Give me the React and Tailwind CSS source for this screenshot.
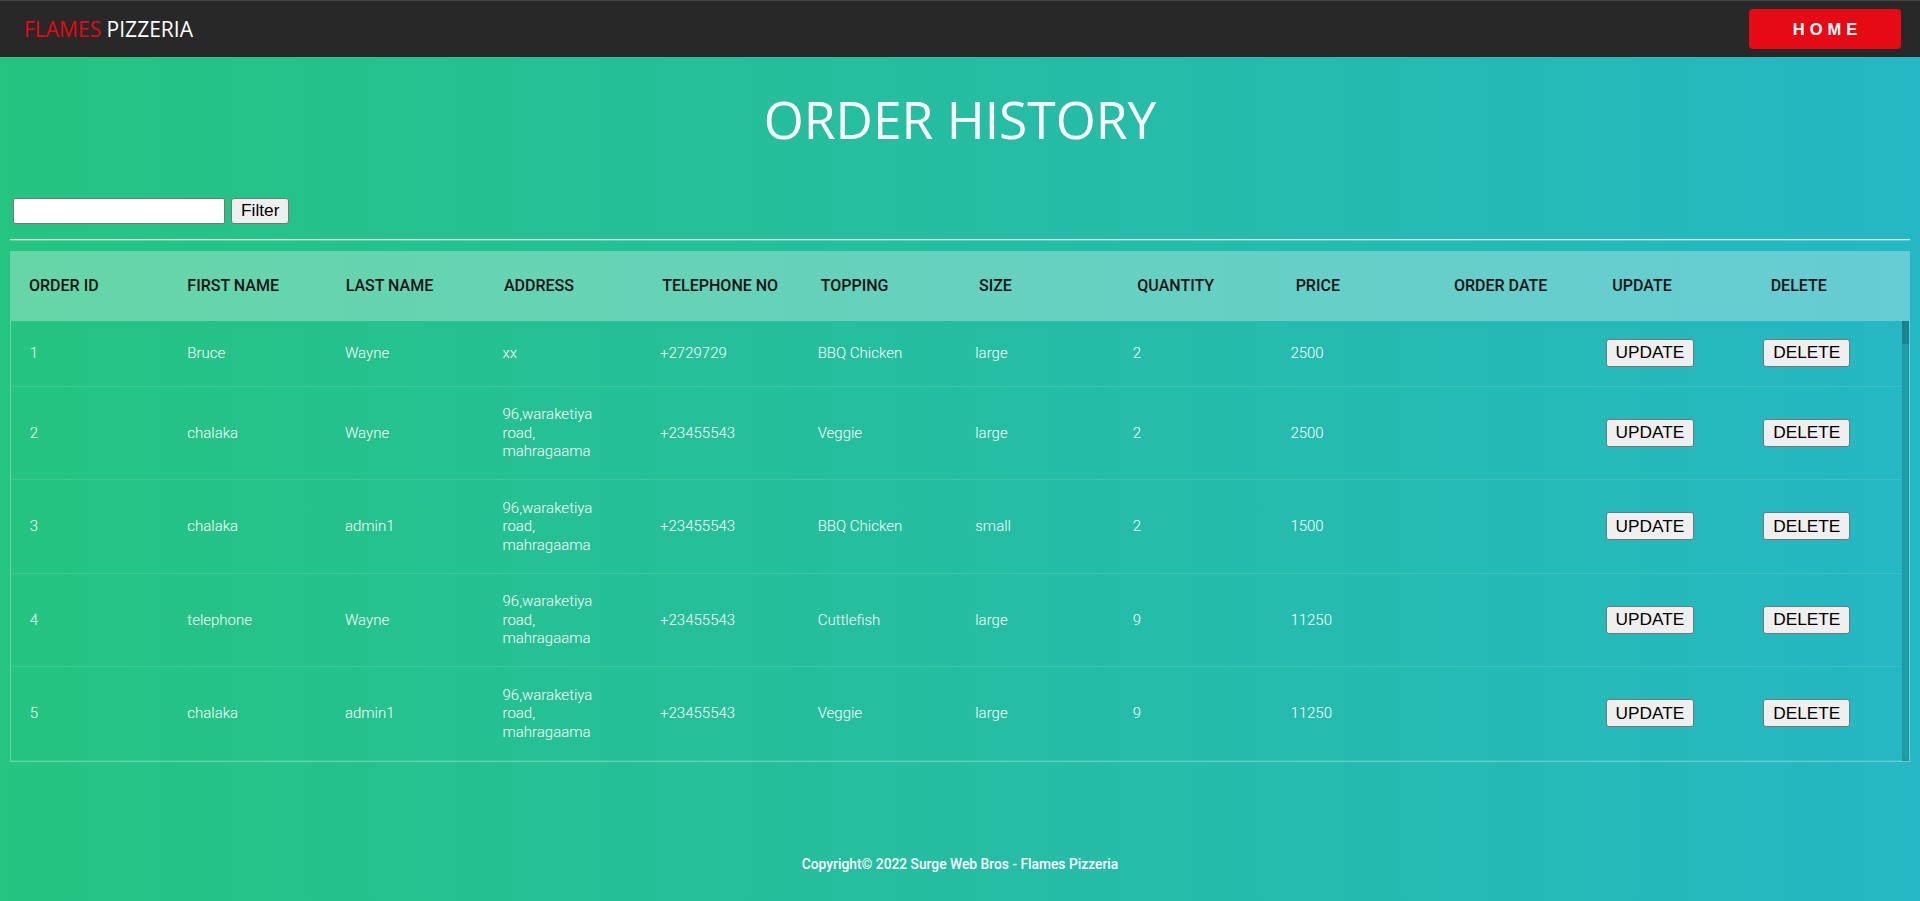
import React from "react";

const headers = [
  "Order ID",
  "First Name",
  "Last Name",
  "Address",
  "Telephone No",
  "Topping",
  "Size",
  "Quantity",
  "Price",
  "Order Date",
  "Update",
  "Delete",
];

const addr = "96,waraketiya road, mahragaama";

const rows = [
  ["1", "Bruce", "Wayne", "xx", "+2729729", "BBQ Chicken", "large", "2", "2500", ""],
  ["2", "chalaka", "Wayne", addr, "+23455543", "Veggie", "large", "2", "2500", ""],
  ["3", "chalaka", "admin1", addr, "+23455543", "BBQ Chicken", "small", "2", "1500", ""],
  ["4", "telephone", "Wayne", addr, "+23455543", "Cuttlefish", "large", "9", "11250", ""],
  ["5", "chalaka", "admin1", addr, "+23455543", "Veggie", "large", "9", "11250", ""],
];

function NativeButton({ children }) {
  return (
    <button className="h-[28px] px-[9px] bg-[#efefef] border border-[#767676] rounded-[3px] text-[17.3px] leading-none text-black font-['Liberation_Sans',Arial,sans-serif]">
      {children}
    </button>
  );
}

export default function App() {
  return (
    <div className="min-h-screen w-full bg-[linear-gradient(to_right,#25c481,#25b7c4)] flex flex-col">
      {/* Navbar */}
      <nav className="h-[57px] bg-[#282828] border-t border-[#454545] flex items-center justify-between pl-[24px] pr-[19px]">
        <div className="font-['Open_Sans',sans-serif] text-[21px] leading-none">
          <span className="text-[#e50914]">FLAMES</span>
          <span className="text-white"> PIZZERIA</span>
        </div>
        <button className="w-[152px] h-[40px] bg-[#e60a14] rounded-[4px] text-white font-bold text-[16.5px] tracking-[5px] pl-[5px] font-['Liberation_Sans',Arial,sans-serif]">
          HOME
        </button>
      </nav>

      {/* Title */}
      <h1 className="mt-[37px] text-center text-white font-['Open_Sans',sans-serif] text-[51.5px] leading-none font-normal">
        ORDER HISTORY
      </h1>

      {/* Filter */}
      <div className="mt-[52px] ml-[13px] flex items-center gap-[6px]">
        <input
          type="text"
          className="w-[212px] h-[26px] bg-white border border-[#767676] rounded-[2px] px-1 outline-none"
        />
        <button className="h-[26px] px-[9px] bg-[#efefef] border border-[#767676] rounded-[3px] text-[17.3px] leading-none text-black font-['Liberation_Sans',Arial,sans-serif]">
          Filter
        </button>
      </div>

      {/* hr */}
      <div className="mt-[15px] mx-[10px] h-px bg-white/90" />
      <div className="mx-[10px] h-px bg-white/25" />

      {/* Table */}
      <div className="mt-[10px] mx-[10px] font-['Roboto',sans-serif]">
        <div className="grid grid-cols-12 bg-white/30 h-[70px] items-center">
          {headers.map((h) => (
            <div
              key={h}
              className="px-[19px] text-[16px] font-medium uppercase text-[#141414] leading-[20px]"
            >
              {h}
            </div>
          ))}
        </div>
        <div className="border border-white/30 border-t-0 flex">
          <div className="flex-1">
            {rows.map((r, i) => (
              <div
                key={i}
                className="grid grid-cols-12 items-center border-b border-white/10 py-[18.5px]"
              >
                {r.map((c, j) => (
                  <div
                    key={j}
                    className="px-[18.75px] text-[15px] font-light text-white leading-[18.5px]"
                  >
                    {c}
                  </div>
                ))}
                <div className="px-[18.75px]">
                  <NativeButton>UPDATE</NativeButton>
                </div>
                <div className="px-[18.75px]">
                  <NativeButton>DELETE</NativeButton>
                </div>
              </div>
            ))}
          </div>
          <div className="w-[7px] bg-black/10 shadow-[inset_0_0_6px_rgba(0,0,0,0.15)] flex flex-col">
            <div className="h-[23px] bg-black/15" />
          </div>
        </div>
      </div>

      {/* Footer */}
      <footer className="mt-[93px] text-center text-white font-['Roboto',sans-serif] text-[13.8px] leading-[18px] font-medium">
        Copyright© 2022 Surge Web Bros - Flames Pizzeria
      </footer>
    </div>
  );
}
